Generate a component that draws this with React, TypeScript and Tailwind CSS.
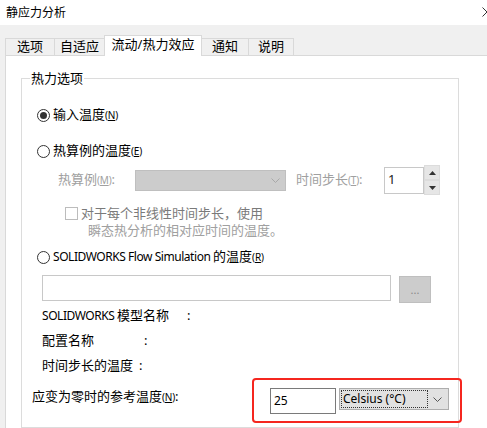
import React from 'react';

const Key: React.FC<{ k: string }> = ({ k }) => (
  <span className="text-[10px] tracking-[-0.2px]">
    (<span className="underline">{k}</span>)
  </span>
);

const Radio: React.FC<{ checked?: boolean }> = ({ checked }) => (
  <span className="w-[13px] h-[13px] rounded-full border border-[#333333] bg-white flex items-center justify-center shrink-0">
    {checked && <span className="w-[7px] h-[7px] rounded-full bg-[#333333]" />}
  </span>
);

const Chevron: React.FC<{ color: string }> = ({ color }) => (
  <svg width="9" height="5" viewBox="0 0 9 5" fill="none">
    <path d="M0.5 0.5L4.5 4.5L8.5 0.5" stroke={color} strokeWidth="1" />
  </svg>
);

const tabs = [
  { label: '选项', cls: 'w-[49px] border-l' },
  { label: '自适应', cls: 'w-[50px] border-l' },
  { label: '流动/热力效应', cls: 'w-[98px] border-l border-r', active: true },
  { label: '通知', cls: 'w-[46px]' },
  { label: '说明', cls: 'w-[46px] border-l border-r' },
];

const App: React.FC = () => {
  return (
    <div className="relative w-[487px] h-[428px] overflow-hidden bg-[#f0f0f0] text-[13px] text-black font-['Noto_Sans','Noto_Sans_CJK_SC',sans-serif]">
      {/* title bar */}
      <div className="h-[25px] bg-white flex items-center pl-[6px] text-[12px] leading-none">静应力分析</div>
      <svg className="absolute left-[482px] top-[7px]" width="10" height="10" viewBox="0 0 10 10">
        <path d="M0.5 0.5L9.5 9.5M9.5 0.5L0.5 9.5" stroke="#333" strokeWidth="1" />
      </svg>

      {/* tab strip */}
      <div className="h-[30px] flex items-end pl-[5px]">
        {tabs.map((t) =>
          t.active ? (
            <div
              key={t.label}
              className={`${t.cls} relative z-10 -mb-px h-[21px] bg-white border-t border-[#d9d9d9] flex items-center justify-center pb-[2px]`}
            >
              {t.label}
            </div>
          ) : (
            <div
              key={t.label}
              className={`${t.cls} h-[17px] border-t border-[#d9d9d9] flex items-center justify-center`}
            >
              {t.label}
            </div>
          )
        )}
      </div>

      {/* panel */}
      <div className="ml-[5px] h-[400px] bg-white border-t border-l border-[#d9d9d9] pt-[22px] pl-[15px]">
        <div className="relative w-[438px] h-[350px] border border-[#dcdcdc]">
          <div className="absolute left-[8px] -top-[10px] bg-white px-[1px] leading-[18px]">热力选项</div>

          <div className="flex flex-col">
            {/* radio 1 */}
            <div className="mt-[26px] h-[20px] pl-[15px] flex items-center gap-[3px]">
              <Radio checked />
              <span>
                输入温度
                <Key k="N" />
              </span>
            </div>

            {/* radio 2 */}
            <div className="mt-[16px] h-[20px] pl-[15px] flex items-center gap-[3px]">
              <Radio />
              <span>
                热算例的温度
                <Key k="E" />
              </span>
            </div>

            {/* study row */}
            <div className="mt-[4px] h-[30px] pl-[36px] flex items-center text-[#a0a0a0]">
              <span className="w-[77px]">
                热算例
                <Key k="M" />:
              </span>
              <div className="w-[151px] h-[21px] bg-[#cccccc] border border-[#bfbfbf] flex items-center justify-end pr-[5px]">
                <Chevron color="#a8a8a8" />
              </div>
              <span className="ml-[10px] w-[88px]">
                时间步长
                <Key k="T" />:
              </span>
              <div className="w-[40px] h-[27px] border border-[#c8c8c8] bg-white pl-[3px] pt-[3px] leading-[16px] text-[#222]">1</div>
              <div className="flex flex-col w-[16px] h-[30px]">
                <div className="h-[15px] bg-[#e6e6e6] border border-[#dcdcdc] flex items-center justify-center">
                  <svg width="7" height="4" viewBox="0 0 7 4">
                    <path d="M0 4L3.5 0L7 4Z" fill="#333" />
                  </svg>
                </div>
                <div className="h-[15px] bg-[#e6e6e6] border border-[#dcdcdc] flex items-center justify-center">
                  <svg width="7" height="4" viewBox="0 0 7 4">
                    <path d="M0 0L3.5 4L7 0Z" fill="#333" />
                  </svg>
                </div>
              </div>
            </div>

            {/* checkbox */}
            <div className="mt-[10px] pl-[43px] leading-[17px]">
              <div className="flex items-center gap-[3px] text-[#7a7a7a]">
                <span className="w-[13px] h-[13px] border border-[#bcbcbc] bg-white shrink-0" />
                <span>对于每个非线性时间步长，使用</span>
              </div>
              <div className="pl-[23px] text-[#a0a0a0]">瞬态热分析的相对应时间的温度。</div>
            </div>

            {/* radio 3 */}
            <div className="mt-[8px] h-[20px] pl-[15px] flex items-center gap-[3px]">
              <Radio />
              <span>
                <span className="text-[12px] tracking-[-0.45px]">SOLIDWORKS Flow Simulation </span>的温度
                <Key k="R" />
              </span>
            </div>

            {/* file row */}
            <div className="mt-[8px] pl-[20px] flex items-start">
              <div className="w-[349px] h-[26px] border border-[#c8c8c8] bg-white" />
              <div className="ml-[8px] mt-[1px] w-[32px] h-[27px] bg-[#cccccc] border border-[#bfbfbf] flex items-center justify-center text-[11px] text-[#8a8a8a] leading-none">
                ...
              </div>
            </div>

            {/* info rows */}
            <div className="mt-[3px] h-[20px] pl-[20px] flex items-center">
              <span>
                <span className="text-[12px] tracking-[-0.45px]">SOLIDWORKS </span>模型名称
              </span>
              <span className="ml-[18px]">:</span>
            </div>
            <div className="mt-[5px] h-[20px] pl-[20px] flex items-center">
              <span>配置名称</span>
              <span className="ml-[50px]">:</span>
            </div>
            <div className="mt-[5px] h-[20px] pl-[20px] flex items-center">
              <span>时间步长的温度</span>
              <span className="ml-[6px]">:</span>
            </div>

            {/* reference temperature */}
            <div className="mt-[10px] pl-[10px] flex items-start">
              <span className="w-[238px] h-[20px] leading-[20px]">
                应变为零时的参考温度
                <Key k="N" />:
              </span>
              <div className="mt-[2px] w-[66px] h-[26px] border border-[#7a7a7a] bg-white pl-[3px] flex items-center text-[12px]">25</div>
              <div className="mt-[2px] ml-[3px] w-[110px] h-[22px] bg-[#e1e1e1] border border-[#adadad] flex items-center p-[1px]">
                <div className="w-[87px] h-full border border-dotted border-[#333] flex items-center pl-[1px] text-[12px] leading-none">
                  Celsius (°C)
                </div>
                <div className="flex-1 flex items-center justify-center">
                  <Chevron color="#555" />
                </div>
              </div>
            </div>
          </div>
        </div>
      </div>

      {/* red highlight */}
      <div className="absolute left-[252px] top-[378px] w-[210px] h-[45px] border-2 border-[#f5261f] rounded-[4px] pointer-events-none" />
    </div>
  );
};

export default App;
